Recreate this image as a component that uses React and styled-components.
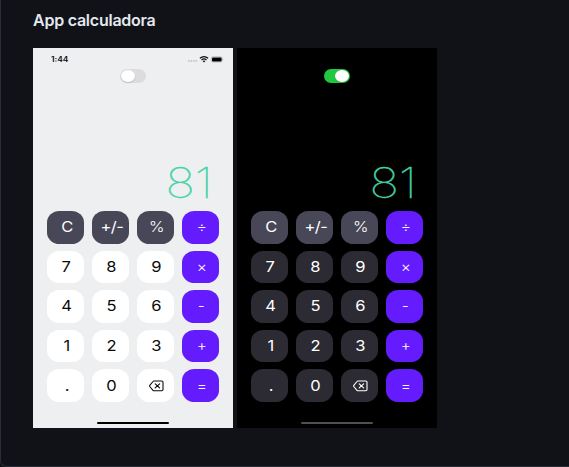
import React from "react";
import styled, { createGlobalStyle } from "styled-components";

const GlobalStyle = createGlobalStyle`
  *, *::before, *::after { box-sizing: border-box; }
  html, body { margin: 0; background: #0f1015; overflow: hidden; }
  body { font-family: Inter, "Liberation Sans", sans-serif; }
`;

const Card = styled.section`
  width: 569px;
  height: 467px;
  padding: 8px 32px 0;
  background: #111217;
  border: solid #2b2e36;
  border-width: 0 0 1px 1px;
  border-bottom-left-radius: 6px;
`;

const Title = styled.h2`
  margin: 0 0 16px;
  height: 24px;
  font-size: 16px;
  font-weight: 600;
  line-height: 24px;
  letter-spacing: -0.24px;
  color: #e2e8f0;
`;

const Screens = styled.div`
  display: flex;
  gap: 4px;
`;

const Phone = styled.article`
  display: flex;
  flex-direction: column;
  width: 200px;
  height: 380px;
  background: ${(p) => (p.$dark ? "#000000" : "#eeeff1")};
`;

const StatusBar = styled.div`
  display: flex;
  align-items: center;
  justify-content: space-between;
  height: 21px;
  padding: 2px 9px 0 18px;
  color: #0c0c0e;
`;

const Clock = styled.span`
  font-size: 7px;
  font-weight: 600;
  line-height: 9px;
  transform: scaleX(1.2);
  transform-origin: left;
`;

const Toggle = styled.div`
  display: flex;
  justify-content: ${(p) => (p.$on ? "flex-end" : "flex-start")};
  align-self: center;
  width: 26px;
  height: 14px;
  padding: 0.7px;
  border-radius: 7px;
  background: ${(p) => (p.$on ? "#22c740" : "#dcdce0")};
`;

const Knob = styled.span`
  width: 14.5px;
  height: 12.6px;
  border-radius: 50%;
  background: #ffffff;
  box-shadow: 0 1px 1.5px rgba(0, 0, 0, 0.14);
`;

const Display = styled.div`
  display: flex;
  align-items: flex-end;
  justify-content: flex-end;
  height: 128px;
  padding: 0 20.5px 7.5px 0;
`;

const Result = styled.span`
  font-size: 42.5px;
  font-weight: 100;
  line-height: 43px;
  -webkit-text-stroke: 0.5px #43d3a5;
  color: #43d3a5;
  transform: scaleX(1.16);
  transform-origin: right;
`;

const Keypad = styled.div`
  display: grid;
  grid-template-columns: repeat(4, 37px);
  grid-auto-rows: 32.6px;
  gap: 7px 8px;
  padding-left: 14px;
`;

const keyColors = {
  action: () => ["#484757", "#ffffff"],
  operator: () => ["#641cff", "#ffffff"],
  digit: (dark) => (dark ? ["#2c2a33", "#ffffff"] : ["#ffffff", "#0b0b0b"]),
};

const Key = styled.button`
  display: flex;
  align-items: center;
  justify-content: center;
  margin: 0;
  padding: 0 0 0 2.2px;
  border: 0;
  border-radius: 12.5px / 11.5px;
  font: ${(p) => (p.$light ? 300 : 400)} 14.5px/18px Inter, "Liberation Sans", sans-serif;
  letter-spacing: ${(p) => (p.$kind === "action" ? "-0.6px" : "0")};
  white-space: nowrap;
  background: ${(p) => keyColors[p.$kind](p.$dark)[0]};
  color: ${(p) => keyColors[p.$kind](p.$dark)[1]};
`;

const KeyLabel = styled.span`
  transform: scaleX(${(p) => (p.$kind === "operator" ? 1.07 : 1.14)});
`;

const HomeBar = styled.div`
  align-self: center;
  width: 71.4px;
  height: 2.4px;
  margin-top: auto;
  margin-bottom: 3.6px;
  border-radius: 2px;
  background: ${(p) => (p.$dark ? "#505052" : "#000000")};
`;

const StatusIcons = () => (
  <svg width="36" height="9" viewBox="0 0 36 9" fill="none" aria-hidden="true">
    <g fill="#c3c4c8">
      <rect x="0" y="5" width="1.7" height="1.7" rx=".5" />
      <rect x="2.5" y="5" width="1.7" height="1.7" rx=".5" />
      <rect x="5" y="5" width="1.7" height="1.7" rx=".5" />
      <rect x="7.4" y="5" width="1.7" height="1.7" rx=".5" />
    </g>
    <g stroke="#0c0c0e" strokeWidth="1.2">
      <path d="M11.9 3.3Q16 0 20.1 3.3" />
      <path d="M13.5 4.9Q16 3 18.5 4.9" />
    </g>
    <path d="M14.6 5.9Q16 4.9 17.4 5.9L16 7.4Z" fill="#0c0c0e" />
    <rect x="23.3" y="1.7" width="11" height="5.4" rx="1.6" stroke="#a5a6aa" strokeWidth=".6" />
    <rect x="24" y="2.4" width="9.6" height="4" rx="1" fill="#000" />
    <path d="M34.9 3.6Q35.9 4.4 34.9 5.2Z" fill="#8b8c90" />
  </svg>
);

const BackspaceIcon = () => (
  <svg width="15" height="12" viewBox="0 0 15 12" fill="none" stroke="currentColor" strokeLinecap="round" strokeLinejoin="round" aria-hidden="true">
    <path d="M5 1H12.8Q14 1 14 2.2V9.6Q14 10.8 12.8 10.8H5Q4.4 10.8 4 10.3L.8 6.5Q.4 5.9 .8 5.3L4 1.5Q4.4 1 5 1Z" strokeWidth="1.1" />
    <path d="M6.2 3.9L10.6 7.9M10.6 3.9L6.2 7.9" strokeWidth="1.15" />
  </svg>
);

const keys = [
  ["C", "action"], ["+/-", "action"], ["%", "action"], ["÷", "operator"],
  ["7", "digit"], ["8", "digit"], ["9", "digit"], ["×", "operator"],
  ["4", "digit"], ["5", "digit"], ["6", "digit"], ["-", "operator"],
  ["1", "digit"], ["2", "digit"], ["3", "digit"], ["+", "operator"],
  [".", "digit"], ["0", "digit"], ["⌫", "digit"], ["=", "operator"],
];

const Calculator = ({ dark = false }) => (
  <Phone $dark={dark}>
    <StatusBar>
      {!dark && (
        <>
          <Clock>1:44</Clock>
          <StatusIcons />
        </>
      )}
    </StatusBar>
    <Toggle $on={dark}>
      <Knob />
    </Toggle>
    <Display>
      <Result>81</Result>
    </Display>
    <Keypad>
      {keys.map(([label, kind]) => (
        <Key key={label} $kind={kind} $dark={dark} $light={label === "%" || kind === "operator"}>
          {label === "⌫" ? <BackspaceIcon /> : <KeyLabel $kind={kind}>{label}</KeyLabel>}
        </Key>
      ))}
    </Keypad>
    <HomeBar $dark={dark} />
  </Phone>
);

export default function App() {
  return (
    <>
      <GlobalStyle />
      <Card>
        <Title>App calculadora</Title>
        <Screens>
          <Calculator />
          <Calculator dark />
        </Screens>
      </Card>
    </>
  );
}
